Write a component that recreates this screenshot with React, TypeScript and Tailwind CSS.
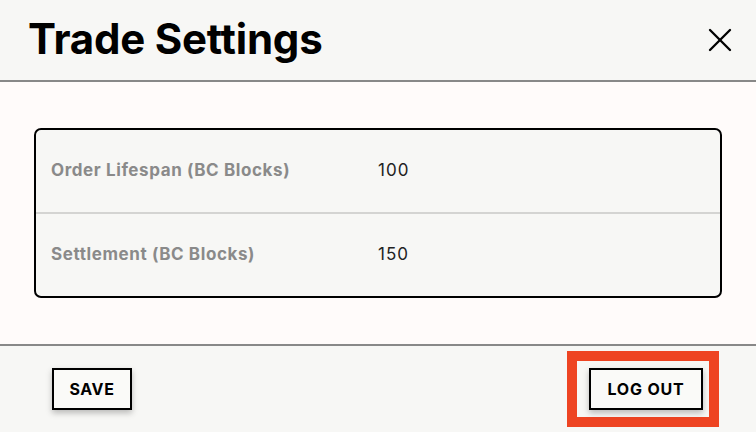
import { X } from 'lucide-react'

const rows = [
  { label: 'Order Lifespan (BC Blocks)', value: '100' },
  { label: 'Settlement (BC Blocks)', value: '150' },
]

export default function App() {
  return (
    <div
      className="w-[756px] h-[432px] flex flex-col bg-[#f7f7f5] text-black overflow-hidden"
      style={{ fontFamily: 'Inter, "Noto Sans", sans-serif' }}
    >
      <header className="h-[82px] shrink-0 flex items-center justify-between pl-[28px] pr-[16px] border-b-2 border-[#888888]">
        <h1 className="text-[42px] font-bold tracking-[-0.005em] leading-none pb-[2px]">Trade Settings</h1>
        <button className="w-10 h-10 flex items-center justify-center">
          <X size={40} strokeWidth={1.4} />
        </button>
      </header>

      <main className="h-[264px] shrink-0 bg-[#fffbfa] px-[34px] pt-[46px] border-b-2 border-[#888888]">
        <div className="h-[170px] border-2 border-black rounded-[7px] bg-[#f7f7f5] flex flex-col">
          {rows.map((row, i) => (
            <div
              key={row.label}
              className={`flex-1 flex items-center pl-[15px] ${i === 0 ? 'border-b-2 border-[#d4d4d2]' : ''}`}
            >
              <span className="w-[327px] text-[17px] font-bold tracking-[0.035em] text-[#8a8a8a]">{row.label}</span>
              <span className="text-[17px] tracking-[0.06em] text-[#222222]">{row.value}</span>
            </div>
          ))}
        </div>
      </main>

      <footer className="flex-1 flex items-start justify-between pl-[52px] pr-[37px] pt-[5px]">
        <div className="pt-[17px]">
          <button className="h-[42px] w-[80px] flex items-center justify-center border-2 border-black bg-[#fafaf8] text-[16px] font-bold tracking-[0.04em] shadow-[0_3px_6px_rgba(0,0,0,0.25)]">
            SAVE
          </button>
        </div>
        <div className="border-[10px] border-[#ee4422] pl-[12px] pr-[6px] py-[7px]">
          <button className="h-[42px] w-[114px] flex items-center justify-center border-2 border-black bg-[#fafaf8] text-[16px] font-bold tracking-[0.05em] shadow-[0_3px_6px_rgba(0,0,0,0.25)]">
            LOG OUT
          </button>
        </div>
      </footer>
    </div>
  )
}
